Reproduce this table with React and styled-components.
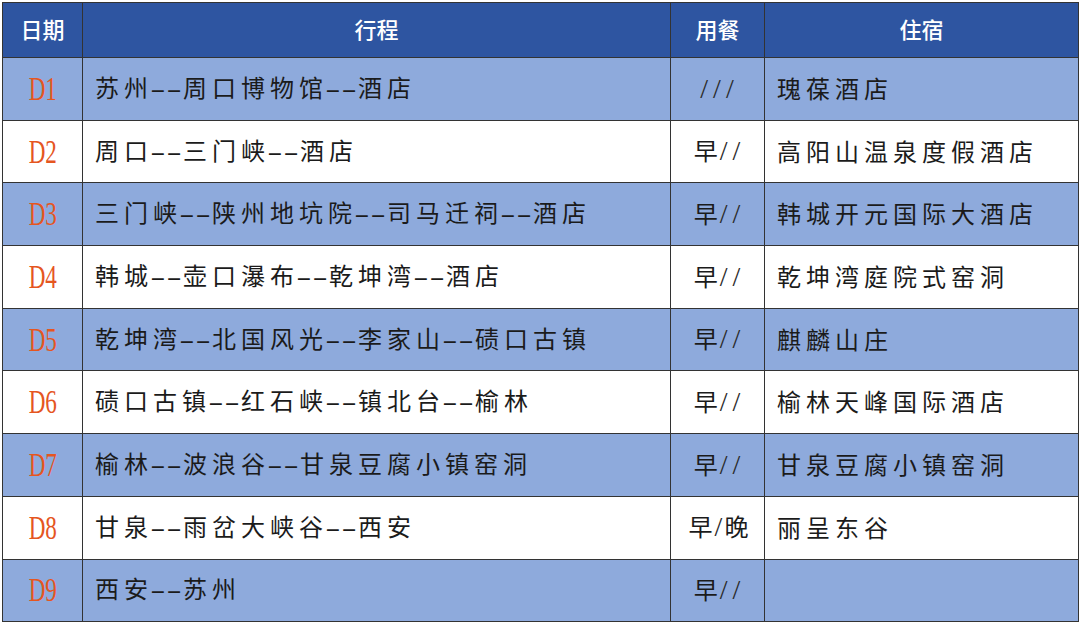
import React from "react";
import styled, { createGlobalStyle } from "styled-components";

const GlobalStyle = createGlobalStyle`
  html, body {
    margin: 0;
    padding: 0;
    background: #ffffff;
  }
`;

const rows = [
  { day: "D1", route: "苏州--周口博物馆--酒店", meal: "///", hotel: "瑰葆酒店" },
  { day: "D2", route: "周口--三门峡--酒店", meal: "早//", hotel: "高阳山温泉度假酒店" },
  { day: "D3", route: "三门峡--陕州地坑院--司马迁祠--酒店", meal: "早//", hotel: "韩城开元国际大酒店" },
  { day: "D4", route: "韩城--壶口瀑布--乾坤湾--酒店", meal: "早//", hotel: "乾坤湾庭院式窑洞" },
  { day: "D5", route: "乾坤湾--北国风光--李家山--碛口古镇", meal: "早//", hotel: "麒麟山庄" },
  { day: "D6", route: "碛口古镇--红石峡--镇北台--榆林", meal: "早//", hotel: "榆林天峰国际酒店" },
  { day: "D7", route: "榆林--波浪谷--甘泉豆腐小镇窑洞", meal: "早//", hotel: "甘泉豆腐小镇窑洞" },
  { day: "D8", route: "甘泉--雨岔大峡谷--西安", meal: "早/晚", hotel: "丽呈东谷" },
  { day: "D9", route: "西安--苏州", meal: "早//", hotel: "" },
];

const Page = styled.div`
  padding: 2px;
  width: 1080px;
  height: 625px;
  box-sizing: border-box;
`;

const Table = styled.table`
  width: 1076px;
  border-collapse: collapse;
  table-layout: fixed;
  border: 1.5px solid #4a4a4a;
`;

const HeadCell = styled.th`
  height: 51px;
  padding: 0 0 3px 0;
  background: #2e55a1;
  color: #ffffff;
  font-family: "Noto Sans CJK SC", "Liberation Sans", sans-serif;
  font-weight: 500;
  font-size: 22px;
  line-height: 1.2;
  text-align: center;
  border: 1px solid #333;
`;

const Row = styled.tr`
  background: ${(p) => (p.$alt ? "#8eaadc" : "#ffffff")};
`;

const Cell = styled.td`
  height: 60.7px;
  padding: 0 0 1px ${(p) => (p.$center ? "0" : "12px")};
  border: 1px solid #333;
  color: #1b1b1b;
  font-family: "Noto Sans CJK SC", "Liberation Serif", serif;
  font-weight: 400;
  font-size: 24px;
  line-height: 1.2;
  letter-spacing: 5px;
  text-align: ${(p) => (p.$center ? "center" : "left")};
  white-space: nowrap;
`;

const DayCell = styled(Cell)`
  height: 61.7px;
  padding-bottom: 0;
`;

const DayLabel = styled.span`
  display: inline-block;
  font-family: "Liberation Serif", serif;
  font-size: 34px;
  line-height: 1;
  letter-spacing: 0;
  color: #e5561f;
  transform: scaleX(0.68);
`;

const Dash = styled.span`
  display: inline-block;
  margin: 0 8px 0 5px;
  font-family: "Liberation Serif", serif;
  font-size: 24px;
  letter-spacing: 0.5px;
  transform: scaleX(1.9);
`;

const MealCell = styled(Cell)`
  letter-spacing: 2px;
  padding-left: 4px;
`;

const Slash = styled.span`
  font-family: "Liberation Serif", serif;
  font-size: 28px;
  letter-spacing: ${(p) => (p.$last ? "2px" : "5px")};
  color: #2a2a2a;
`;

function Route({ text }) {
  const parts = text.split("--");
  return parts.map((p, i) => (
    <React.Fragment key={i}>
      {p}
      {i < parts.length - 1 && <Dash>--</Dash>}
    </React.Fragment>
  ));
}

function Meal({ text }) {
  const chars = text.split("");
  return chars.map((c, i) =>
    c === "/" ? (
      <Slash key={i} $last={i < chars.length - 1 && chars[i + 1] !== "/"}>
        /
      </Slash>
    ) : (
      <React.Fragment key={i}>{c}</React.Fragment>
    )
  );
}

export default function App() {
  return (
    <Page>
      <GlobalStyle />
      <Table>
        <colgroup>
          <col style={{ width: 80 }} />
          <col style={{ width: 588 }} />
          <col style={{ width: 94 }} />
          <col style={{ width: 314 }} />
        </colgroup>
        <thead>
          <tr>
            <HeadCell>日期</HeadCell>
            <HeadCell>行程</HeadCell>
            <HeadCell>用餐</HeadCell>
            <HeadCell>住宿</HeadCell>
          </tr>
        </thead>
        <tbody>
          {rows.map((r, i) => (
            <Row key={r.day} $alt={i % 2 === 0}>
              <DayCell $center>
                <DayLabel>{r.day}</DayLabel>
              </DayCell>
              <Cell>
                <Route text={r.route} />
              </Cell>
              <MealCell $center>
                <Meal text={r.meal} />
              </MealCell>
              <Cell>{r.hotel}</Cell>
            </Row>
          ))}
        </tbody>
      </Table>
    </Page>
  );
}
